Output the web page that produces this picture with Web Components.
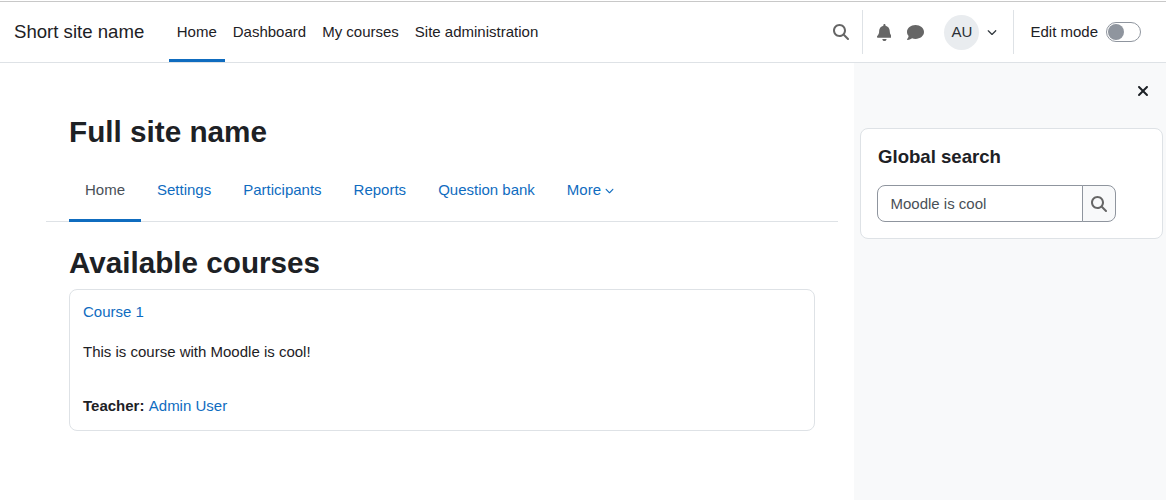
<!DOCTYPE html>
<html lang="en">
<head>
<meta charset="utf-8">
<title>Full site name</title>
<style>
  html, body { margin: 0; padding: 0; }
  body {
    font-family: "Liberation Sans", Arial, sans-serif;
    font-size: 15px;
    line-height: 22.5px;
    color: #1d2125;
    background: #fff;
  }
</style>
</head>
<body>
<moodle-page>
  <site-navbar slot="top"></site-navbar>
  <main-region>
    <page-header slot="header" heading="Full site name"></page-header>
    <secondary-tabs slot="tabs"></secondary-tabs>
    <h-title>Available courses</h-title>
    <course-card name="Course 1" summary="This is course with Moodle is cool!" teacher="Admin User"></course-card>
  </main-region>
  <block-drawer slot="drawer">
    <search-block heading="Global search" value="Moodle is cool"></search-block>
  </block-drawer>
</moodle-page>

<script>
// font awesome solid shapes used across the page
const ICONS = {
  search: ["0 0 512 512", "M416 208c0 45.9-14.9 88.3-40 122.7L502.6 457.4c12.5 12.5 12.5 32.8 0 45.3s-32.8 12.5-45.3 0L330.7 376c-34.4 25.2-76.8 40-122.7 40C93.1 416 0 322.9 0 208S93.1 0 208 0S416 93.1 416 208zM208 352a144 144 0 1 0 0-288 144 144 0 1 0 0 288z"],
  bell: ["0 0 448 512", "M224 0c-17.7 0-32 14.3-32 32V51.2C119 66 64 130.6 64 208v18.8c0 47-17.3 92.4-48.5 127.6l-7.4 8.3c-8.4 9.4-10.4 22.9-5.3 34.4S19.4 416 32 416H416c12.6 0 24-7.4 29.2-18.9s3.1-25-5.3-34.4l-7.4-8.3C401.3 319.2 384 273.9 384 226.8V208c0-77.4-55-142-128-156.8V32c0-17.7-14.3-32-32-32zm45.3 493.3c12-12 18.7-28.3 18.7-45.3H224 160c0 17 6.7 33.3 18.7 45.3s28.3 18.7 45.3 18.7s33.3-6.7 45.3-18.7z"],
  comment: ["0 0 512 512", "M512 240c0 114.9-114.6 208-256 208c-37.1 0-72.3-6.4-104.1-17.9c-11.9 8.7-31.3 20.6-54.3 30.6C73.6 471.1 44.7 480 16 480c-6.5 0-12.3-3.9-14.8-9.9c-2.5-6-1.1-12.8 3.4-17.4c.3-.3 .7-.7 1.6-1.7c1.1-1.2 2.8-3.1 4.9-5.7c4.1-5 9.6-12.4 15.2-21.6c10-16.6 19.5-38.4 21.4-62.9C17.7 326.8 0 285.1 0 240C0 125.1 114.6 32 256 32s256 93.1 256 208z"],
  close: ["0 0 384 512", "M342.6 150.6c12.5-12.5 12.5-32.8 0-45.3s-32.8-12.5-45.3 0L192 210.7 86.6 105.4c-12.5-12.5-32.8-12.5-45.3 0s-12.5 32.8 0 45.3L146.7 256 41.4 361.4c-12.5 12.5-12.5 32.8 0 45.3s32.8 12.5 45.3 0L192 301.3 297.4 406.6c12.5 12.5 32.8 12.5 45.3 0s12.5-32.8 0-45.3L237.3 256 342.6 150.6z"],
  chevron: ["0 0 512 512", "M233.4 406.6c12.5 12.5 32.8 12.5 45.3 0l192-192c12.5-12.5 12.5-32.8 0-45.3s-32.8-12.5-45.3 0L256 338.7 86.6 169.4c-12.5-12.5-32.8-12.5-45.3 0s-12.5 32.8 0 45.3l192 192z"]
};

class FaIcon extends HTMLElement {
  constructor() {
    super();
    this.attachShadow({ mode: "open" });
  }
  connectedCallback() {
    const [box, d] = ICONS[this.getAttribute("name")];
    const size = this.getAttribute("size") || 16;
    this.shadowRoot.innerHTML = `
    <style>
      :host { display: inline-flex; align-items: center; justify-content: center; }
      svg { display: block; height: ${size}px; fill: currentColor; }
    </style>
    <svg viewBox="${box}" aria-hidden="true"><path d="${d}"/></svg>`;
  }
}
customElements.define("fa-icon", FaIcon);

class MoodlePage extends HTMLElement {
  constructor() {
    super();
    this.attachShadow({ mode: "open" });
    this.shadowRoot.innerHTML = `
    <style>
      :host { display: flex; flex-direction: column; box-sizing: border-box; min-height: 100vh; padding-top: 1px; }
      .body { display: flex; flex: 1; }
    </style>
    <slot name="top"></slot>
    <div class="body">
      <slot></slot>
      <slot name="drawer"></slot>
    </div>`;
  }
}
customElements.define("moodle-page", MoodlePage);

class SiteNavbar extends HTMLElement {
  constructor() {
    super();
    this.attachShadow({ mode: "open" });
    this.shadowRoot.innerHTML = `
    <style>
      :host {
        display: flex;
        align-items: stretch;
        box-sizing: border-box;
        height: 62px;
        padding-left: 14px;
        border-top: 1px solid #c8c8c8;
        border-bottom: 1px solid #dee2e6;
        background: #fff;
      }
      .brand { display: flex; align-items: center; font-size: 18.6px; color: #1d2125; margin-right: 24.5px; }
      nav { display: flex; }
      nav a {
        display: flex;
        align-items: center;
        padding: 0 8px;
        color: #1d2125;
        text-decoration: none;
      }
      nav a.active { box-shadow: inset 0 -3px 0 #0f6cbf; }
      .tools { display: flex; align-items: center; margin-left: auto; }
      .search { color: #666; margin-right: 13px; }
      .divider { width: 1px; height: 44px; background: #dee2e6; }
      .bell { color: #666; margin-left: 14px; }
      .chat { color: #666; margin-left: 16px; }
      .avatar {
        display: flex;
        align-items: center;
        justify-content: center;
        width: 35px;
        height: 35px;
        margin-left: 20px;
        border-radius: 50%;
        background: #e9ecef;
        color: #2b3036;
      }
      .caret { color: #343a40; margin: 0 16px 0 8px; }
      .edit { margin-left: 16px; margin-right: 8px; }
      .switch {
        box-sizing: border-box;
        width: 35px;
        height: 20px;
        margin-right: 25px;
        padding: 1px;
        border: 1px solid #8f959e;
        border-radius: 10px;
        background: #fff;
      }
      .switch span { display: block; width: 16px; height: 16px; border-radius: 50%; background: #8f959e; }
    </style>
    <div class="brand">Short site name</div>
    <nav>
      <a class="active" href="#">Home</a>
      <a href="#">Dashboard</a>
      <a href="#">My courses</a>
      <a href="#">Site administration</a>
    </nav>
    <div class="tools">
      <fa-icon class="search" name="search" size="16"></fa-icon>
      <div class="divider"></div>
      <fa-icon class="bell" name="bell" size="17"></fa-icon>
      <fa-icon class="chat" name="comment" size="17"></fa-icon>
      <div class="avatar">AU</div>
      <fa-icon class="caret" name="chevron" size="10"></fa-icon>
      <div class="divider"></div>
      <span class="edit">Edit mode</span>
      <div class="switch"><span></span></div>
    </div>`;
  }
}
customElements.define("site-navbar", SiteNavbar);

class MainRegion extends HTMLElement {
  constructor() {
    super();
    this.attachShadow({ mode: "open" });
    this.shadowRoot.innerHTML = `
    <style>
      :host { display: block; flex: 1; min-width: 0; padding: 0 39px 0 69px; }
    </style>
    <slot name="header"></slot>
    <slot name="tabs"></slot>
    <slot></slot>`;
  }
}
customElements.define("main-region", MainRegion);

class PageHeader extends HTMLElement {
  constructor() {
    super();
    this.attachShadow({ mode: "open" });
    this.shadowRoot.innerHTML = `
    <style>
      :host { display: block; padding-top: 51px; }
      h1 { margin: 0; font-size: 29.7px; line-height: 36px; font-weight: 700; color: #1d2125; }
    </style>
    <h1></h1>`;
  }
  connectedCallback() {
    this.shadowRoot.querySelector("h1").textContent = this.getAttribute("heading");
  }
}
customElements.define("page-header", PageHeader);

class SecondaryTabs extends HTMLElement {
  constructor() {
    super();
    this.attachShadow({ mode: "open" });
    this.shadowRoot.innerHTML = `
    <style>
      :host {
        display: flex;
        margin: 8px -23px 0 -23px;
        padding-left: 23px;
        height: 64px;
        box-sizing: border-box;
        border-bottom: 1px solid #dee2e6;
      }
      a {
        display: flex;
        align-items: center;
        gap: 4px;
        height: 64px;
        box-sizing: border-box;
        padding: 0 16px;
        color: #0f6cbf;
        text-decoration: none;
      }
      a.active { color: #495057; box-shadow: inset 0 -3px 0 #0f6cbf; }
    </style>
    <a class="active" href="#">Home</a>
    <a href="#">Settings</a>
    <a href="#">Participants</a>
    <a href="#">Reports</a>
    <a href="#">Question bank</a>
    <a href="#">More <fa-icon name="chevron" size="9"></fa-icon></a>`;
  }
}
customElements.define("secondary-tabs", SecondaryTabs);

class HTitle extends HTMLElement {
  constructor() {
    super();
    this.attachShadow({ mode: "open" });
    this.shadowRoot.innerHTML = `
    <style>
      :host { display: block; margin-top: 23px; margin-bottom: 8px; font-size: 29.65px; line-height: 36px; font-weight: 700; color: #1d2125; }
    </style>
    <slot></slot>`;
  }
}
customElements.define("h-title", HTitle);

class CourseCard extends HTMLElement {
  constructor() {
    super();
    this.attachShadow({ mode: "open" });
    this.shadowRoot.innerHTML = `
    <style>
      :host {
        display: block;
        box-sizing: border-box;
        height: 142px;
        padding: 11px 13px;
        border: 1px solid #dee2e6;
        border-radius: 8px;
      }
      a { color: #0f6cbf; text-decoration: none; }
      p { margin: 17px 0 0; }
      .teacher { margin-top: 32px; }
      b { font-weight: 700; }
      .who { margin-left: 0.2px; }
    </style>
    <a class="name" href="#"></a>
    <p class="summary"></p>
    <p class="teacher"><b>Teacher:</b> <a class="who" href="#"></a></p>`;
  }
  connectedCallback() {
    this.shadowRoot.querySelector(".name").textContent = this.getAttribute("name");
    this.shadowRoot.querySelector(".summary").textContent = this.getAttribute("summary");
    this.shadowRoot.querySelector(".who").textContent = this.getAttribute("teacher");
  }
}
customElements.define("course-card", CourseCard);

class BlockDrawer extends HTMLElement {
  constructor() {
    super();
    this.attachShadow({ mode: "open" });
    this.shadowRoot.innerHTML = `
    <style>
      :host {
        display: block;
        box-sizing: border-box;
        flex: 0 0 312px;
        padding: 0 3px 0 6px;
        background: #f8f9fa;
      }
      .head { display: flex; align-items: flex-start; justify-content: flex-end; height: 65px; padding: 20px 14px 0 0; box-sizing: border-box; color: #1d2125; }
    </style>
    <div class="head"><fa-icon name="close" size="16"></fa-icon></div>
    <slot></slot>`;
  }
}
customElements.define("block-drawer", BlockDrawer);

class SearchBlock extends HTMLElement {
  constructor() {
    super();
    this.attachShadow({ mode: "open" });
    this.shadowRoot.innerHTML = `
    <style>
      :host {
        display: block;
        box-sizing: border-box;
        height: 111px;
        padding: 16px 17px 0;
        border: 1px solid #dee2e6;
        border-radius: 8px;
        background: #fff;
      }
      h5 { margin: 0 0 17px; font-size: 18.6px; line-height: 23px; font-weight: 700; color: #1d2125; }
      .group { display: flex; width: 239px; height: 37px; margin-left: -1px; }
      .field {
        flex: 1;
        min-width: 0;
        box-sizing: border-box;
        padding: 1px 12.5px 0;
        border: 1px solid #8f959e;
        border-radius: 8px 0 0 8px;
        background: #fff;
        color: #495057;
        font: inherit;
        outline: none;
      }
      button {
        display: flex;
        align-items: center;
        justify-content: center;
        width: 34px;
        margin-left: -1px;
        padding: 0;
        border: 1px solid #8f959e;
        border-radius: 0 8px 8px 0;
        background: #f8f9fa;
        color: #666;
      }
    </style>
    <h5></h5>
    <div class="group">
      <input class="field" type="text">
      <button type="button"><fa-icon name="search" size="16"></fa-icon></button>
    </div>`;
  }
  connectedCallback() {
    this.shadowRoot.querySelector("h5").textContent = this.getAttribute("heading");
    this.shadowRoot.querySelector("input").value = this.getAttribute("value");
  }
}
customElements.define("search-block", SearchBlock);
</script>
</body>
</html>
